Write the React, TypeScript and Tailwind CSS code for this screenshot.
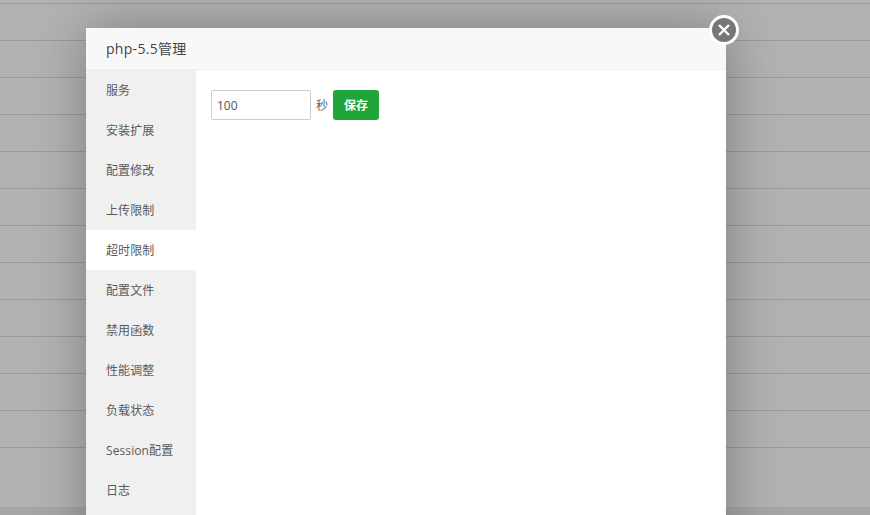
const menu = ["服务", "安装扩展", "配置修改", "上传限制", "超时限制", "配置文件", "禁用函数", "性能调整", "负载状态", "Session配置", "日志"];

const font = "font-['Open_Sans','Noto_Sans_CJK_SC',sans-serif]";

export default function App() {
  return (
    <div className={`relative h-[515px] w-[870px] overflow-hidden bg-[#b2b2b2] ${font}`}>
      <div className="flex flex-col pt-[3px]">
        <div className="h-[1px] bg-[#999999]" />
        {Array.from({ length: 12 }).map((_, i) => (
          <div key={i} className="h-[37px] border-b border-[#999999]" />
        ))}
      </div>
      <div className="absolute inset-x-0 bottom-0 h-[8px] bg-[#a6a6a6]" />
      <div className="absolute left-[86px] top-[28px] h-[520px] w-[640px] bg-white shadow-[1px_1px_50px_rgba(0,0,0,0.3)]">
        <div className="flex h-[42px] items-center border-b border-[#eeeeee] bg-[#f8f8f8] pl-5 text-[14px] tracking-[0.3px] text-[#444444]">
          php-5.5管理
        </div>
        <div className="flex">
          <div className="flex w-[110px] flex-col bg-[#f0f0f0] pb-[20px]">
            {menu.map((m, i) => (
              <div
                key={m}
                className={`flex h-[40px] items-center pl-5 pt-[2px] text-[12px] tracking-[0.1px] text-[#5a5a5a] ${i === 4 ? "bg-white" : ""}`}
              >
                {m}
              </div>
            ))}
          </div>
          <div className="flex flex-1 items-start gap-[5px] pl-[15px] pt-5">
            <input
              readOnly
              value="100"
              className={`h-[30px] w-[100px] rounded-[2px] border border-[#cccccc] bg-white px-[5px] text-[12px] text-[#555555] outline-none ${font}`}
            />
            <span className="flex h-[30px] items-center pt-[1px] text-[12px] text-[#666666]">秒</span>
            <button className={`h-[30px] w-[46px] rounded-[3px] bg-[#20a53a] pt-[2px] text-[12px] font-bold text-white ${font}`}>
              保存
            </button>
          </div>
        </div>
      </div>
      <div className="absolute left-[709px] top-[15px] flex h-[30px] w-[30px] items-center justify-center rounded-full border-[3px] border-white bg-[#777777]">
        <svg width="14" height="14" viewBox="0 0 14 14" fill="none" stroke="white" strokeWidth="2.4">
          <path d="M2 2L12 12M12 2L2 12" />
        </svg>
      </div>
    </div>
  );
}
